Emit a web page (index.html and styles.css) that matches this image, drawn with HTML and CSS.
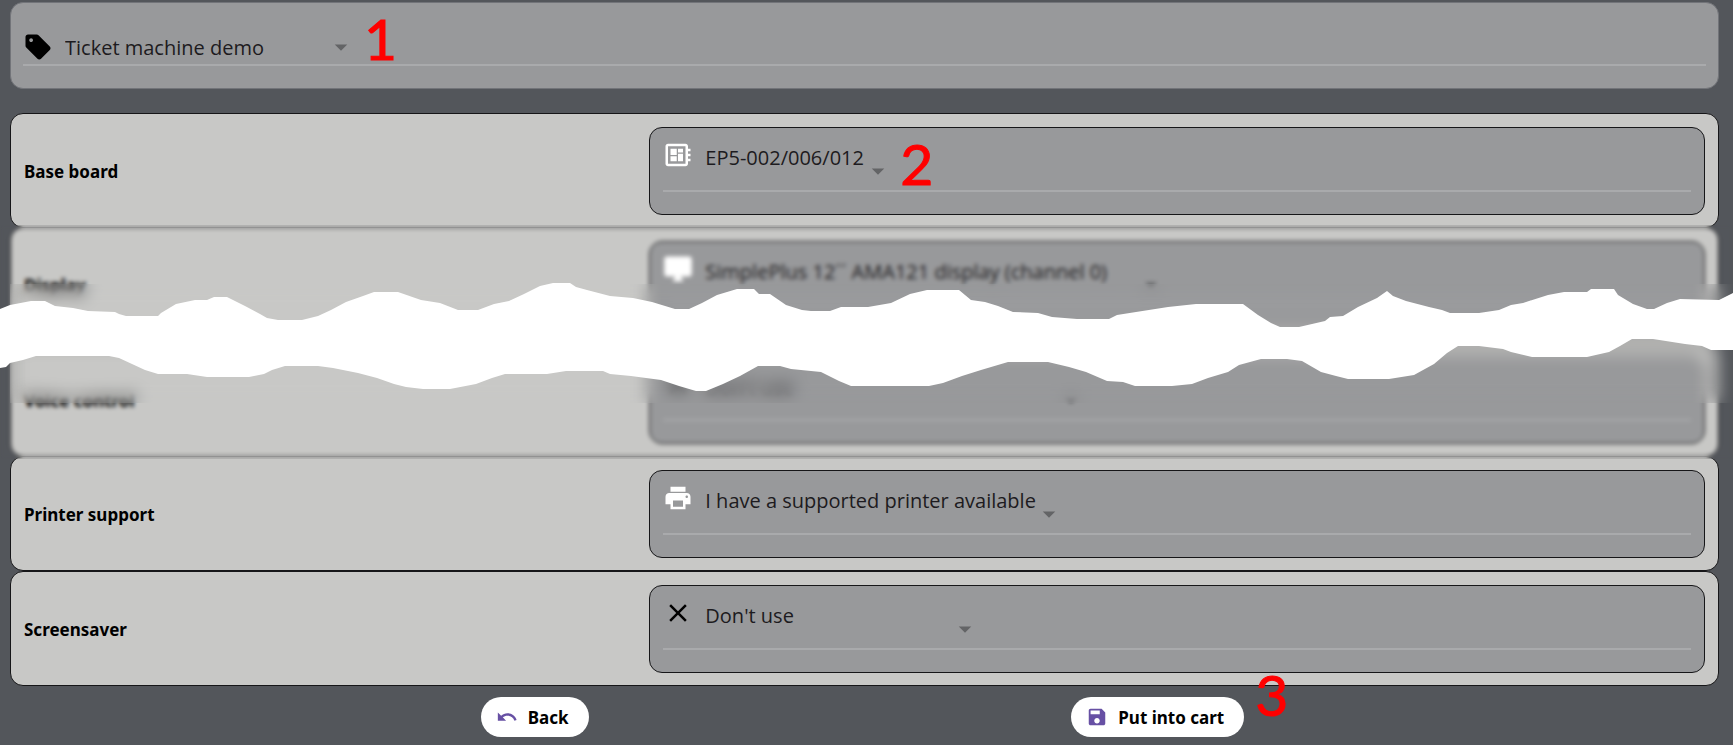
FILE: index.html
```html
<!DOCTYPE html>
<html lang="en">
  <head>
    <meta charset="UTF-8" />
    <meta name="viewport" content="width=device-width, initial-scale=1" />
    <title>Ticket machine demo</title>
    <link rel="stylesheet" href="styles.css">
  </head>
  <body>
    <main class="page">
      <header class="template">
        <div class="field">
          <svg class="icon icon-dark" viewBox="0 0 24 24" aria-hidden="true"><path d="M21.41 11.58l-9-9C12.05 2.22 11.55 2 11 2H4c-1.1 0-2 .9-2 2v7c0 .55.22 1.05.59 1.42l9 9c.36.36.86.58 1.41.58.55 0 1.05-.22 1.41-.59l7-7c.37-.36.59-.86.59-1.41 0-.55-.23-1.06-.59-1.42zM6.500 8C5.670 8 5 7.330 5 6.500S5.670 5 6.500 5 8 5.670 8 6.500 7.330 8 6.500 8z"/></svg>
          <select class="select select-template" aria-label="Template">
            <option>Ticket machine demo</option>
          </select>
          <svg class="arrow" viewBox="0 0 24 24" aria-hidden="true"><path d="M7 10l5 5 5-5z"/></svg>
          <span class="step step-template">1</span>
        </div>
      </header>

      <section class="options">
        <div class="card">
          <label for="board">Base board</label>
          <div class="box">
            <div class="field">
              <svg class="icon" viewBox="0 0 24 24" aria-hidden="true"><path d="M22 9V7h-2V5c0-1.1-.9-2-2-2H4c-1.1 0-2 .9-2 2v14c0 1.1.9 2 2 2h14c1.100 0 2-.9 2-2v-2h2v-2h-2v-2h2v-2h-2V9h2zm-4 10H4V5h14v14zM6 13h5v4H6zm6-6h4v3h-4zM6 7h5v5H6zm6 4h4v6h-4z"/></svg>
              <select class="select select-board" id="board">
                <option>EP5-002/006/012</option>
              </select>
              <svg class="arrow" viewBox="0 0 24 24" aria-hidden="true"><path d="M7 10l5 5 5-5z"/></svg>
              <span class="step step-board">2</span>
            </div>
          </div>
        </div>

        <!-- Shortened part of the list -->
        <div class="skipped">
          <div class="card">
            <label for="display">Display</label>
            <div class="box">
              <div class="field">
                <svg class="icon" viewBox="0 0 24 24" aria-hidden="true"><path d="M21 2H3c-1.100 0-2 .9-2 2v12c0 1.100.9 2 2 2h7l-2 3v1h8v-1l-2-3h7c1.100 0 2-.9 2-2V4c0-1.100-.9-2-2-2z"/></svg>
                <select class="select select-display" id="display">
                  <option>SimplePlus 12´´ AMA121 display (channel 0)</option>
                </select>
                <svg class="arrow" viewBox="0 0 24 24" aria-hidden="true"><path d="M7 10l5 5 5-5z"/></svg>
              </div>
            </div>
          </div>
          <div class="card">
            <label for="voice">Voice control</label>
            <div class="box">
              <div class="field">
                <svg class="icon icon-dark" viewBox="0 0 24 24" aria-hidden="true"><path d="M19 6.410L17.590 5 12 10.590 6.410 5 5 6.410 10.590 12 5 17.590 6.410 19 12 13.410 17.590 19 19 17.590 13.410 12z"/></svg>
                <select class="select select-voice" id="voice">
                  <option>Don't use</option>
                </select>
                <svg class="arrow" viewBox="0 0 24 24" aria-hidden="true"><path d="M7 10l5 5 5-5z"/></svg>
              </div>
            </div>
          </div>
          <div class="haze"></div>
          <div class="haze-deep"></div>
          <svg class="tear" viewBox="0 283 1733 108" preserveAspectRatio="none" aria-hidden="true">
            <path d="M0 309L10 305 31 301 45 301 55 306 73 308 88 311 115 312 119 314 126 316 158 316 161 313 176 304 195 300 207 300 214 297 227 297 245 306 260 314 267 318 278 320 302 320 318 316 331 310 346 302 363 296 374 292 398 292 421 300 440 303 458 310 478 310 494 304 509 301 524 294 540 286 553 283 570 283 576 287 587 290 610 296 633 298 652 302 675 309 689 309 702 303 717 295 737 289 754 289 759 294 770 294 786 305 802 310 811 311 830 311 841 307 868 307 891 303 910 294 927 290 959 290 971 300 985 302 998 306 1013 312 1038 313 1052 317 1077 319 1109 319 1117 315 1136 312 1168 307 1196 304 1243 304 1258 315 1271 323 1280 327 1299 327 1325 321 1330 317 1343 316 1358 307 1377 298 1387 291 1393 296 1406 301 1429 307 1442 310 1450 313 1479 313 1499 310 1511 305 1523 303 1548 295 1564 292 1587 292 1591 289 1614 289 1618 295 1633 304 1647 309 1654 309 1667 303 1680 299 1719 300 1733 293V350H1711L1702 346 1685 344 1653 339 1632 339 1620 346 1609 352 1587 357 1532 357 1511 352 1503 349 1479 346 1458 346 1447 353 1434 364 1414 375 1389 379 1348 379 1336 376 1321 372 1302 361 1287 359 1261 359 1239 365 1228 372 1208 378 1192 384 1172 386 1135 386 1123 382 1107 381 1086 372 1069 367 1048 362 1008 362 981 370 962 376 943 383 929 386 851 386 839 381 821 372 791 369 780 366 758 366 740 376 723 384 706 391 696 391 679 386 661 380 631 376 610 374 603 371 566 371 547 374 505 374 492 378 476 384 450 389 423 389 406 387 394 384 377 378 358 373 333 368 318 366 285 366 272 370 264 374 249 377 207 377 187 374 158 374 145 370 119 358 109 356 36 356 23 360 10 363 6 367 0 368z"/>
          </svg>
        </div>

        <div class="card">
          <label for="printer">Printer support</label>
          <div class="box">
            <div class="field">
              <svg class="icon" viewBox="0 0 24 24" aria-hidden="true"><path d="M19 8H5c-1.660 0-3 1.340-3 3v6h4v4h12v-4h4v-6c0-1.660-1.340-3-3-3zm-3 11H8v-5h8v5zm3-7c-.55 0-1-.45-1-1s.45-1 1-1 1 .45 1 1-.45 1-1 1zm-1-9H6v4h12V3z"/></svg>
              <select class="select select-printer" id="printer">
                <option>I have a supported printer available</option>
              </select>
              <svg class="arrow" viewBox="0 0 24 24" aria-hidden="true"><path d="M7 10l5 5 5-5z"/></svg>
            </div>
          </div>
        </div>

        <div class="card">
          <label for="screensaver">Screensaver</label>
          <div class="box">
            <div class="field">
              <svg class="icon icon-dark" viewBox="0 0 24 24" aria-hidden="true"><path d="M19 6.410L17.590 5 12 10.590 6.410 5 5 6.410 10.590 12 5 17.590 6.410 19 12 13.410 17.590 19 19 17.590 13.410 12z"/></svg>
              <select class="select select-screensaver" id="screensaver">
                <option>Don't use</option>
              </select>
              <svg class="arrow" viewBox="0 0 24 24" aria-hidden="true"><path d="M7 10l5 5 5-5z"/></svg>
            </div>
          </div>
        </div>
      </section>

      <footer class="actions">
        <button class="btn" type="button">
          <svg viewBox="0 0 24 24" aria-hidden="true"><path d="M12.500 8c-2.650 0-5.050.99-6.900 2.600L2 7v9h9l-3.620-3.620c1.390-1.160 3.160-1.880 5.120-1.880 3.540 0 6.550 2.310 7.600 5.500l2.370-.78C21.080 11.030 17.150 8 12.500 8z"/></svg>
          Back
        </button>
        <button class="btn" type="button">
          <svg viewBox="0 0 24 24" aria-hidden="true"><path d="M17 3H5c-1.110 0-2 .9-2 2v14c0 1.100.89 2 2 2h14c1.100 0 2-.9 2-2V7l-4-4zm-5 16c-1.660 0-3-1.340-3-3s1.340-3 3-3 3 1.340 3 3-1.340 3-3 3zm3-10H5V5h10v4z"/></svg>
          Put into cart
          <span class="step step-cart">3</span>
        </button>
      </footer>
    </main>
  </body>
</html>
```
FILE: styles.css
```css
:root {
  --bg: #53565b;
  --card: #c8c8c6;
  --box: #98999b;
  --line: #a9aaac;
  --border: #161618;
  --text: #1d1b20;
  --accent: #6750a4;
  --radius: 13px;
}
* {
  box-sizing: border-box;
}
body {
  margin: 0;
  font-family: "Noto Sans", "Open Sans", sans-serif;
  background: var(--bg);
  color: #000;
}
.page {
  padding: 2px 14px 7px 10px;
}

/* Template picker */
.template {
  padding: 27px 12px 22px;
  margin-bottom: 24px;
  background: var(--box);
  border: 1px solid #727479;
  border-radius: var(--radius);
}

/* Option rows */
.card {
  display: grid;
  grid-template-columns: 37.2% 1fr;
  align-items: center;
  padding: 13px 13px 12px;
  background: var(--card);
  border: 1px solid var(--border);
  border-radius: var(--radius);
}
.card label {
  font-size: 17px;
  font-weight: 700;
}
.box {
  padding: 12px 13px 22px;
  background: var(--box);
  border: 1px solid var(--border);
  border-radius: var(--radius);
}
.field {
  display: flex;
  align-items: center;
  position: relative;
  border-bottom: 2px solid var(--line);
}
.box .field {
  align-items: flex-start;
  padding-bottom: 4px;
}
.icon,
.arrow {
  flex: none;
  width: 30px;
  height: 30px;
  fill: #fff;
}
.icon {
  margin-right: 12px;
}
.icon-dark {
  fill: #000;
}
.arrow {
  margin-left: -8px;
  fill: #636466;
  pointer-events: none;
}
.box .arrow {
  margin-top: 16px;
}
.select {
  appearance: none;
  height: 34px;
  padding: 0;
  border: none;
  background: transparent;
  color: var(--text);
  font-family: "Open Sans", "Noto Sans", sans-serif;
  font-size: 20px;
}
.select-template {
  width: 269px;
}
.select-board {
  width: 166px;
}
.select-display {
  width: 439px;
}
.select-voice {
  width: 359px;
}
.select-printer {
  width: 337px;
}
.select-screensaver {
  width: 253px;
}

/* Blurred rows with the torn strip on top */
.skipped {
  position: relative;
  margin: -1px -14px -1px -10px;
  padding: 0 14px 0 10px;
}
.haze {
  position: absolute;
  inset: -2px 0;
  backdrop-filter: blur(2px);
}
.haze-deep {
  position: absolute;
  inset: 57px 0 54px 10px;
  backdrop-filter: blur(8px);
}
.tear {
  position: absolute;
  top: 56px;
  left: 0;
  width: 100%;
  height: 108px;
  fill: #fff;
}

/* Red step numbers */
.step {
  position: absolute;
  color: #f00;
  font-family: Lato, sans-serif;
  font-size: 57px;
  font-weight: 400;
  line-height: 57px;
  -webkit-text-stroke: 1px #f00;
}
.step-template {
  top: -20px;
  left: 341px;
}
.step-board {
  top: -5px;
  left: 237px;
}
.step-cart {
  top: -31px;
  right: -44px;
}

.actions {
  display: flex;
  justify-content: space-evenly;
  gap: 12px;
  padding: 11px 4px 0 0;
}
.btn {
  display: flex;
  align-items: center;
  gap: 10px;
  position: relative;
  height: 40px;
  padding: 0 20px 0 15px;
  border: none;
  border-radius: 20px;
  background: #fff;
  color: #000;
  font-family: inherit;
  font-size: 17px;
  font-weight: 700;
  cursor: pointer;
}
.btn svg {
  width: 22px;
  height: 22px;
  fill: var(--accent);
}
```
